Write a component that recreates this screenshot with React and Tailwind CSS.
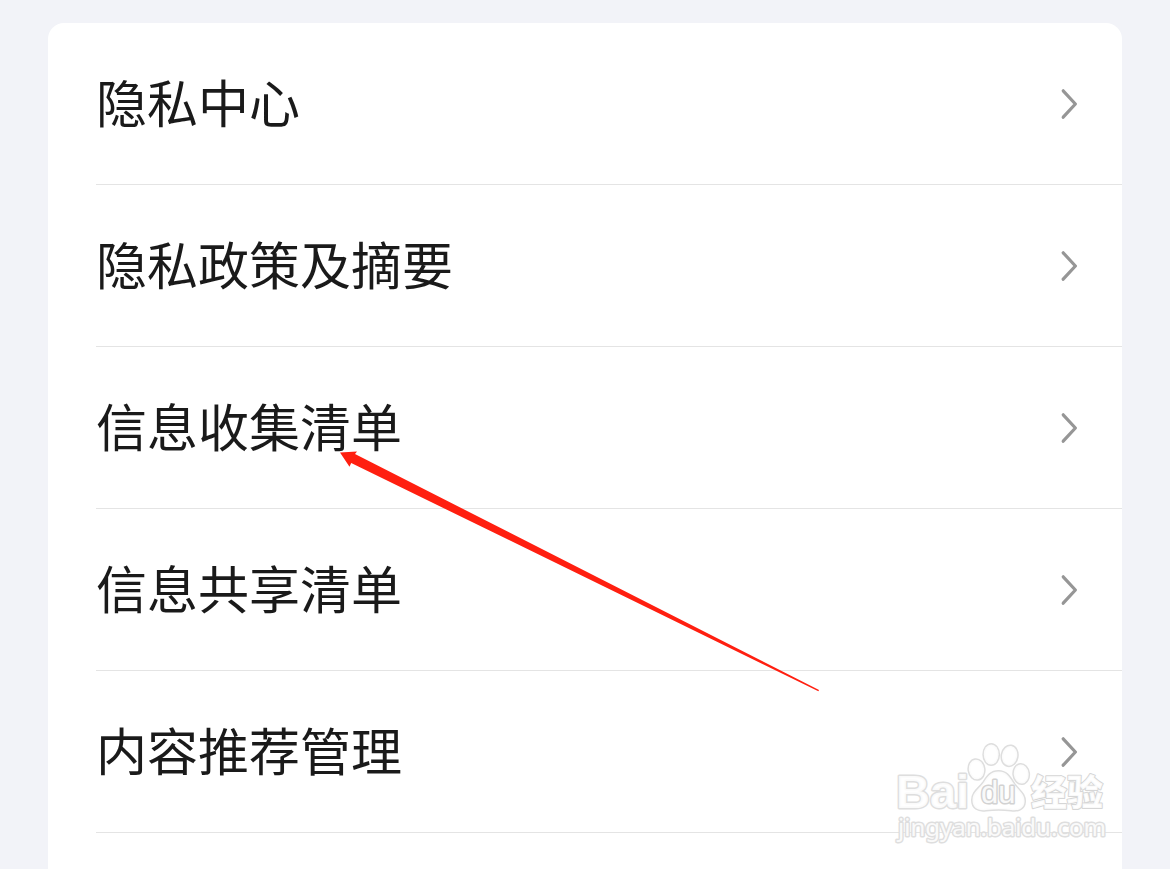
const items = [
  "隐私中心",
  "隐私政策及摘要",
  "信息收集清单",
  "信息共享清单",
  "内容推荐管理",
];

function Chevron() {
  return (
    <svg className="h-8 w-5 shrink-0" viewBox="0 0 20 32" fill="none" aria-hidden="true">
      <path d="M3.2 2.8 L15.4 16 L3.2 29.2" stroke="#969696" strokeWidth="3.2" strokeLinecap="round" strokeLinejoin="round" />
    </svg>
  );
}

function Arrow() {
  return (
    <svg className="pointer-events-none absolute left-[340px] top-[451px] h-[241px] w-[480px]" viewBox="0 0 480 241" aria-hidden="true">
      <path d="M0 1.5 L17 0.5 L15 3 L479 238.9 L478.4 240.2 L11.2 12 L9.5 15.8 Z" fill="#ff1f10" />
    </svg>
  );
}

function Watermark() {
  return (
    <svg
      className="pointer-events-none absolute right-[60px] top-[738px] h-[110px] w-[220px]"
      viewBox="0 0 220 110"
      fill="#ffffff"
      fillOpacity="0.9"
      stroke="#dedede"
      strokeLinejoin="round"
      paintOrder="stroke"
    >
      <g strokeWidth="3">
        <ellipse cx="86.5" cy="31.5" rx="7.6" ry="9.9" transform="rotate(-8 86.5 31.5)" />
        <ellipse cx="101.2" cy="16.5" rx="7.4" ry="10.1" />
        <ellipse cx="119.6" cy="17.8" rx="7.6" ry="9.9" transform="rotate(10 119.6 17.8)" />
        <ellipse cx="131.2" cy="36" rx="7.4" ry="9.6" transform="rotate(-6 131.2 36)" />
        <path d="M108.5 33.500 C117 33.500 120 40 124 46 C129 53 135 56 134.5 64 C134 71 128 73 121 72 C113 71 104 71 96 72 C88 73 82.5 70 82.5 62 C82.5 54 89 51 94 44 C98 38 101 33.500 108.5 33.500 Z" />
      </g>
      <text x="6" y="70" fontFamily="'Liberation Sans', Arial, sans-serif" fontWeight="700" fontSize="47" strokeWidth="3">Bai</text>
      <text x="91" y="65" fontFamily="'Liberation Sans', Arial, sans-serif" fontSize="31" stroke="#d2d2d2" strokeWidth="3">du</text>
      <text x="141" y="68" fontFamily="'Noto Sans CJK SC', sans-serif" fontWeight="900" fontSize="36" stroke="#d6d6d6" strokeWidth="2">经验</text>
      <text x="8" y="98" fontFamily="'Noto Sans', sans-serif" fontSize="24" strokeWidth="3">jingyan.baidu.com</text>
    </svg>
  );
}

export default function App() {
  return (
    <main className="relative flex min-h-screen flex-col overflow-hidden bg-[#f2f3f8] px-12 pt-[23px] font-['Noto_Sans_CJK_SC',sans-serif]">
      <nav className="grow rounded-t-2xl bg-white pb-9 pl-12" aria-label="隐私">
        <ul>
          {items.map((label) => (
            <li key={label} className="border-b border-[#e4e4e4]">
              <a href="#" className="flex h-[161px] items-center justify-between pr-[42px] text-[51px] leading-[76px] text-[#1a1a1a]">
                <span className="pb-1.5">{label}</span>
                <Chevron />
              </a>
            </li>
          ))}
        </ul>
      </nav>
      <Arrow />
      <Watermark />
    </main>
  );
}
